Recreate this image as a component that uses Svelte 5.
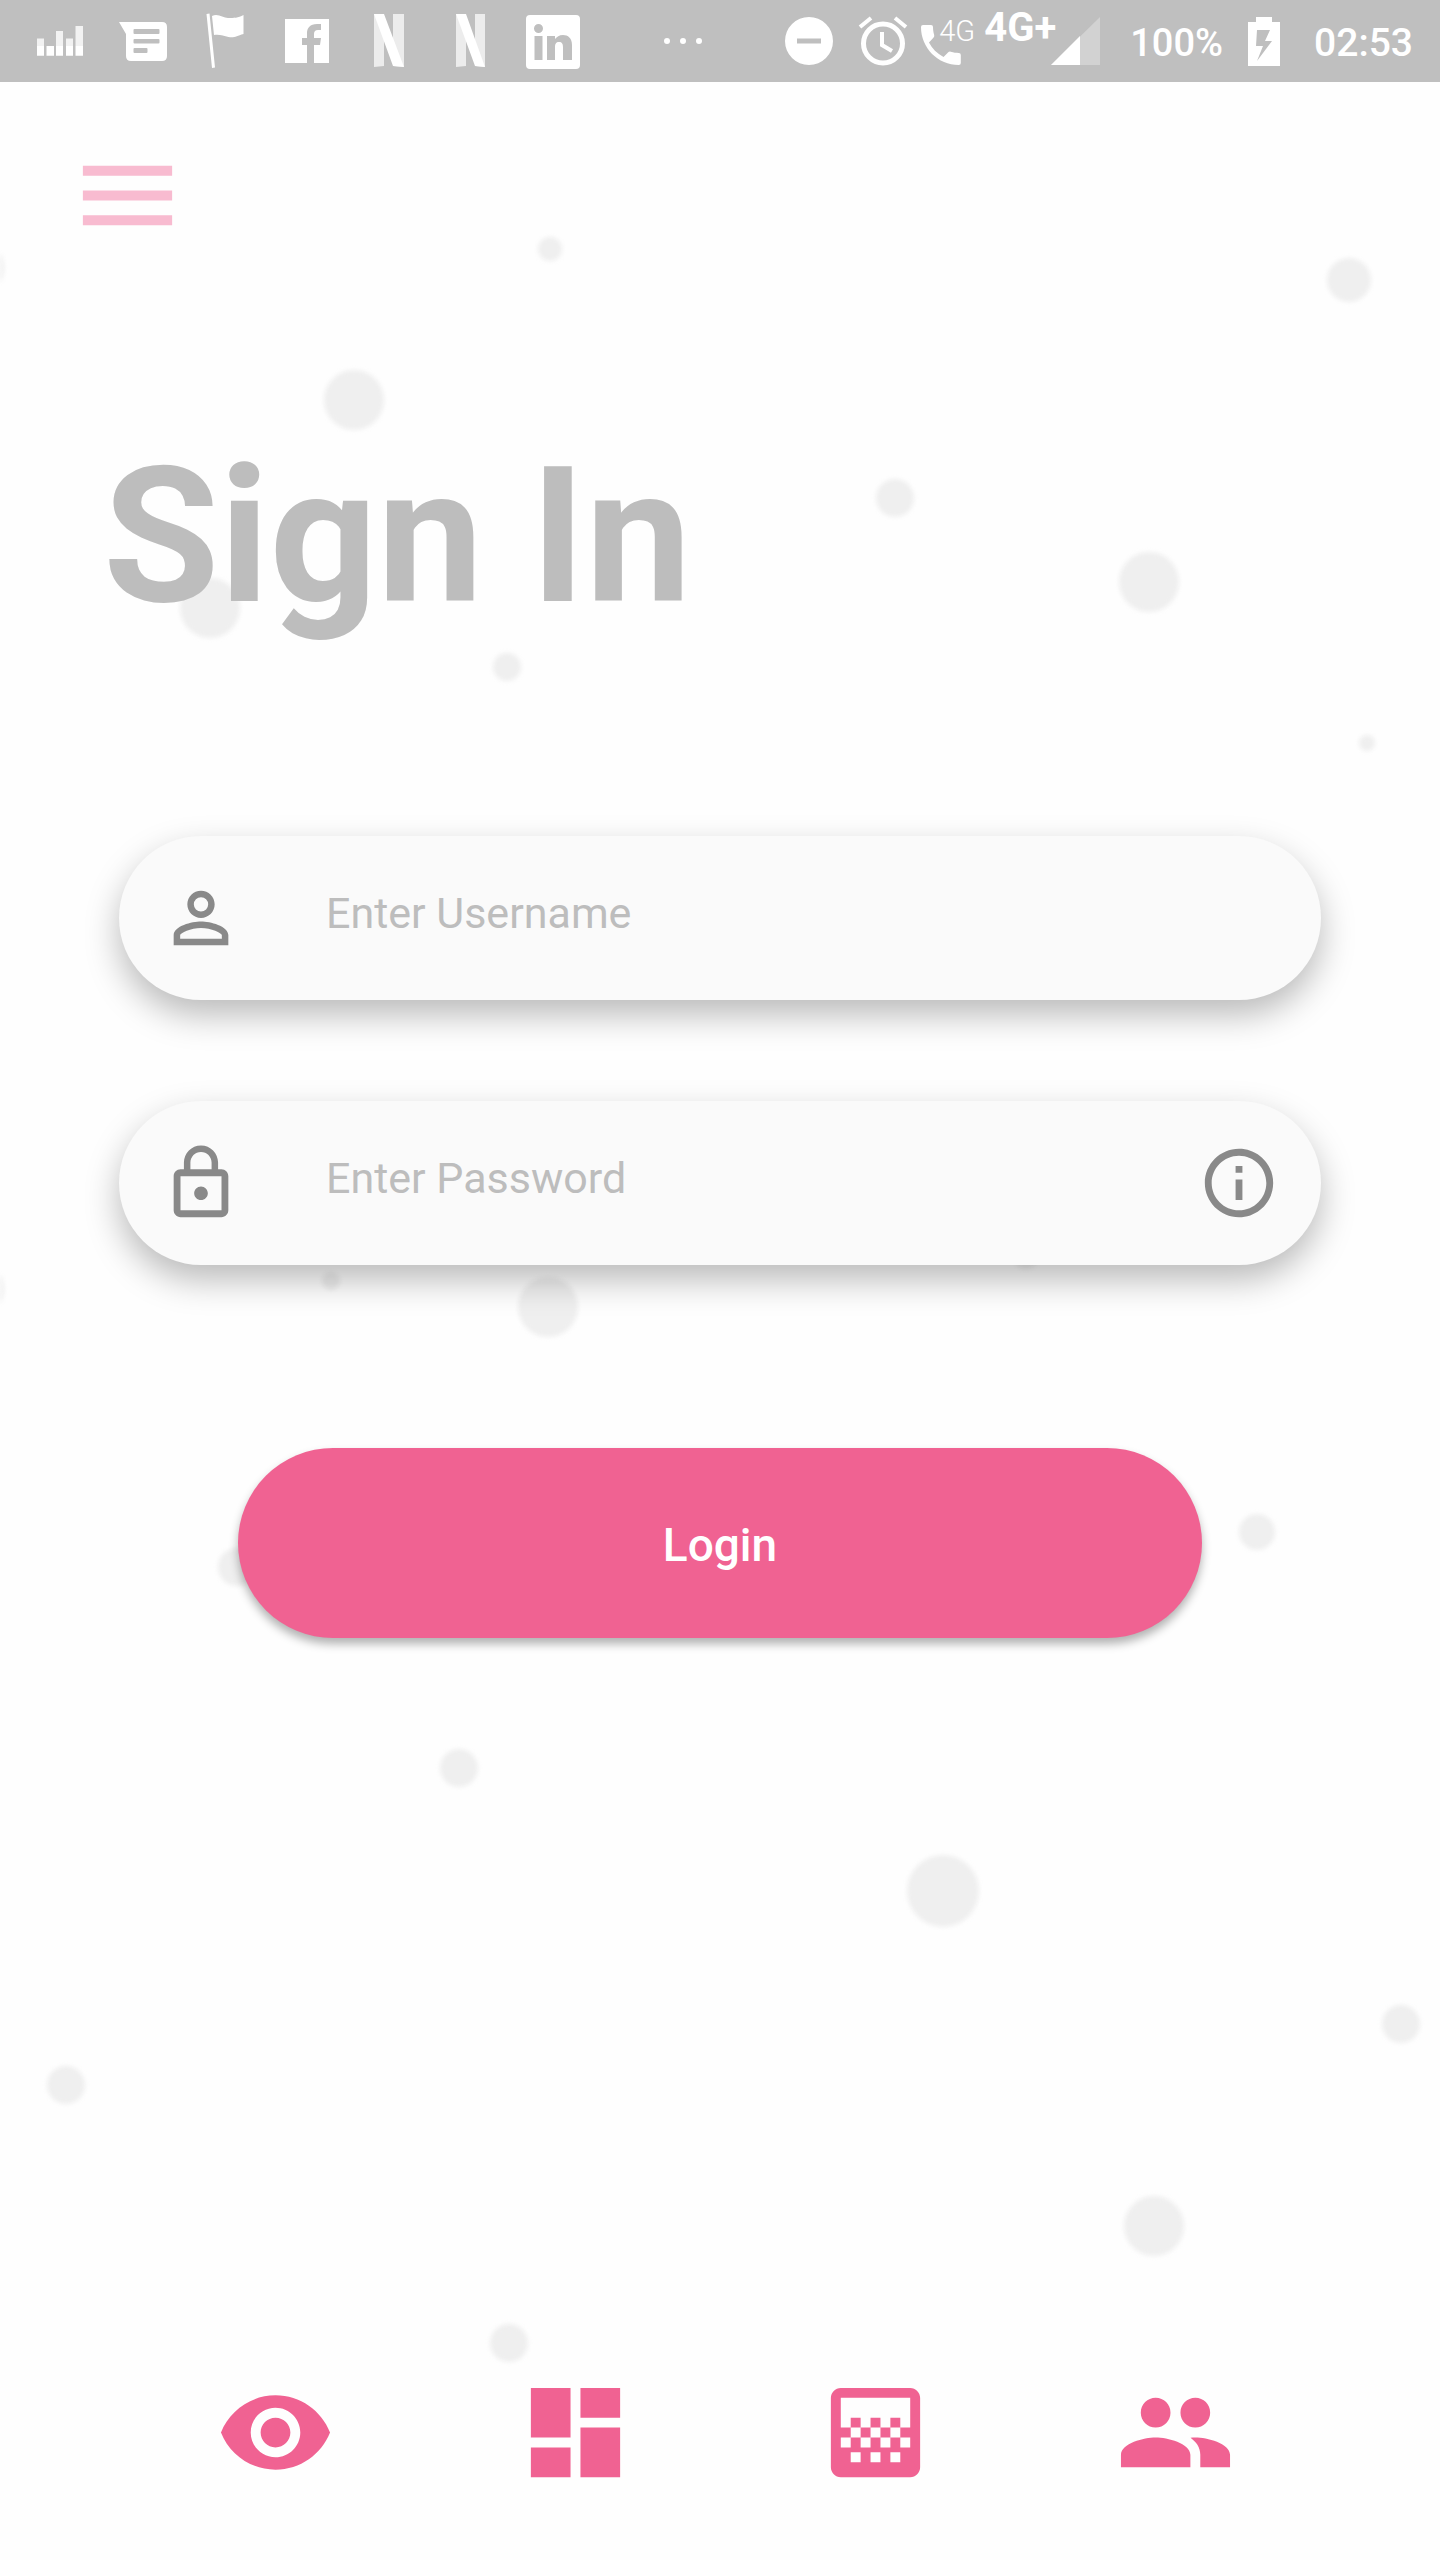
<script>
  // Soft dots scattered behind the form: centre x, centre y, radius
  const dots = [
    [550, 249, 12], [1349, 280, 22], [354, 400, 30], [895, 498, 19], [1149, 582, 30],
    [210, 608, 30], [507, 667, 14], [1367, 743, 8], [-26, 268, 30], [-26, 1289, 30],
    [331, 1281, 9], [548, 1307, 30], [1026, 1256, 13], [1257, 1532, 18], [237, 1567, 19],
    [459, 1768, 19], [943, 1891, 36], [1401, 2024, 19], [66, 2085, 19], [1154, 2226, 30],
    [509, 2343, 19]
  ];
  let username = $state('');
  let password = $state('');
</script>

<div class="screen">
  <svg class="dots" viewBox="0 0 1440 2560" preserveAspectRatio="xMidYMid slice" aria-hidden="true">
    {#each dots as [x, y, r]}
      <circle cx={x} cy={y} {r} />
    {/each}
  </svg>

  <header class="status">
    <div class="notices">
      <svg viewBox="0 0 640 82" width="640" height="82" aria-hidden="true">
        <g fill="#fff">
          <g opacity=".8">
            <path d="M37 38.500h7V46h-7zM56 31h7v15h-7zM66 38.500h7V46h-7zM75.500 26h7.500v20h-7.500z" />
          </g>
          <path d="M37 46h7v9.700h-7zM46.500 46h7.500v9.700h-7.500zM56 46h7v9.700h-7zM66 46h7v9.700h-7zM75.500 46h7.500v9.700h-7.500z" />
          <path fill-rule="evenodd" d="M119 22H162q5 0 5 5V56q0 5-5 5H131q-5 0-5-5V34zM134.500 29q-1 0-1 1v3q0 1 1 1h24q1 0 1-1v-3q0-1-1-1zM134.500 39q-1 0-1 1v2.500q0 1 1 1h24q1 0 1-1V40q0-1-1-1zM134.500 48q-1 0-1 1v3q0 1 1 1h12q1 0 1-1v-3q0-1-1-1z" />
          <path d="M206.500 14l3-.5 5.500 54-3 .5zM212 16c6-3 11 2 16 2 6 0 10 0 15.500-3v19c-7 2-9 4-15 3-5-1-9-3-14.500-2z" />
          <path d="M285 19h44v44h-15V45h6l1-7h-7v-4q0-4 4-4h3v-6h-4c-7 0-10 4-10 9v5h-5v7h5v18h-22z" />
          <g opacity=".7"><path d="M374 14h10v52l-10 1zM393 14h11v53l-11-1zM456 14h10v52l-10 1zM475 14h10v53l-10-1z" /></g>
          <path d="M374 14h10l20 53-11-1zM456 14h10l19 53-10-1z" />
          <path fill-rule="evenodd" d="M530 15h46q4 0 4 4v46q0 4-4 4h-46q-4 0-4-4V19q0-4 4-4zM534.500 36v24h8V36zM538.500 24a4.500 4.500 0 1 0 0 9 4.500 4.500 0 0 0 0-9zM547 36v24h8V47c0-3 1-5 4-5s4 2 4 5v13h9V45c0-7-4-10-9-10-4 0-6 2-8 4v-3z" />
        </g>
      </svg>
      <span class="more"><i></i><i></i><i></i></span>
    </div>
    <div class="system">
      <svg viewBox="785 0 137 82" width="137" height="82" aria-hidden="true">
        <path fill="#fff" fill-rule="evenodd" d="M810 17a24 24 0 1 0 0 48 24 24 0 0 0 0-48zM798 38.500h24v5h-24z" />
        <circle cx="884" cy="43.500" r="19.500" fill="none" stroke="#fff" stroke-width="5" />
        <path d="M883 32v13l10 6M861 27l11-9M907 27l-11-9" fill="none" stroke="#fff" stroke-width="4" />
      </svg>
      <span class="call">
        <svg viewBox="923 26 40 40" width="40" height="40" aria-hidden="true">
          <path fill="#fff" d="M925 26h8q2 0 2 2c0 3 .4 5 1.200 8q.4 1.500-.8 2.800l-4.400 4.700c3 6 8 11 14.500 14.500l4.500-4.500q1.200-1.200 2.800-.8c3 .8 5 1.200 8 1.200q2 0 2 2V64q0 2-2 2C940 66 923 49 923 28q0-2 2-2z" />
        </svg>
        <span>4G</span>
      </span>
      <span class="network">4G+</span>
      <svg class="signal" viewBox="0 0 49 48" width="49" height="48" aria-hidden="true">
        <path fill="#d2d2d2" d="M49 0v48H0z" /><path fill="#fff" d="M29 19v29H0z" />
      </svg>
      <span class="charge">100%</span>
      <svg viewBox="0 0 32 49" width="32" height="49" aria-hidden="true">
        <path fill="#fff" fill-rule="evenodd" d="M8 0h16v5h8v44H0V5h8zM9 13L8 29h7L9 44 24 24h-7l5-11z" />
      </svg>
      <time>02:53</time>
    </div>
  </header>

  <main>
    <button class="menu" aria-label="Open menu">
      <svg viewBox="0 0 24 24"><path d="M3 18h18v-2H3v2zm0-5h18v-2H3v2zm0-7v2h18V6H3z" /></svg>
    </button>

    <h1>Sign In</h1>

    <form onsubmit={(e) => e.preventDefault()}>
      <div class="field">
        <svg class="icon" viewBox="0 0 24 24" aria-hidden="true"><path d="M12 5.900a2.100 2.100 0 1 1 0 4.200 2.100 2.100 0 0 1 0-4.200m0 9c2.970 0 6.100 1.460 6.100 2.100v1.100H5.900V17c0-.64 3.130-2.100 6.100-2.100M12 4C9.790 4 8 5.790 8 8s1.790 4 4 4 4-1.790 4-4-1.790-4-4-4zm0 9c-2.670 0-8 1.340-8 4v3h16v-3c0-2.660-5.330-4-8-4z" /></svg>
        <input type="text" aria-label="Username" placeholder="Enter Username" bind:value={username} />
      </div>
      <div class="field">
        <svg class="icon" viewBox="0 0 24 24" aria-hidden="true"><path d="M12 17c1.100 0 2-.9 2-2s-.9-2-2-2-2 .9-2 2 .9 2 2 2zm6-9h-1V6c0-2.760-2.240-5-5-5S7 3.240 7 6v2H6c-1.100 0-2 .9-2 2v10c0 1.100.9 2 2 2h12c1.100 0 2-.9 2-2V10c0-1.100-.9-2-2-2zM8.900 6c0-1.710 1.390-3.100 3.100-3.100s3.100 1.390 3.100 3.100v2H8.900V6zM18 20H6V10h12v10z" /></svg>
        <input type="password" aria-label="Password" placeholder="Enter Password" bind:value={password} />
        <button class="info" type="button" aria-label="Password help">
          <svg class="icon" viewBox="0 0 24 24"><path d="M11 7h2v2h-2zm0 4h2v6h-2zm1-9C6.480 2 2 6.480 2 12s4.480 10 10 10 10-4.480 10-10S17.520 2 12 2zm0 18c-4.410 0-8-3.590-8-8s3.590-8 8-8 8 3.590 8 8-3.590 8-8 8z" /></svg>
        </button>
      </div>
      <button class="login" type="submit">Login</button>
    </form>
  </main>

  <nav>
    <button aria-label="View"><svg viewBox="0 0 24 24"><path d="M12 4.500C7 4.500 2.730 7.610 1 12c1.730 4.390 6 7.500 11 7.500s9.270-3.110 11-7.500c-1.730-4.390-6-7.500-11-7.500zM12 17c-2.760 0-5-2.240-5-5s2.240-5 5-5 5 2.240 5 5-2.240 5-5 5zm0-8c-1.660 0-3 1.340-3 3s1.340 3 3 3 3-1.340 3-3-1.340-3-3-3z" /></svg></button>
    <button aria-label="Dashboard"><svg viewBox="0 0 24 24"><path d="M3 13h8V3H3v10zm0 8h8v-6H3v6zm10 0h8V11h-8v10zm0-18v6h8V3h-8z" /></svg></button>
    <button aria-label="Gradient"><svg viewBox="0 0 24 24"><path d="M11 9h2v2h-2zm-2 2h2v2H9zm4 0h2v2h-2zm2-2h2v2h-2zM7 9h2v2H7zm12-6H5c-1.100 0-2 .9-2 2v14c0 1.100.9 2 2 2h14c1.100 0 2-.9 2-2V5c0-1.100-.9-2-2-2zM9 18H7v-2h2v2zm4 0h-2v-2h2v2zm4 0h-2v-2h2v2zm2-7h-2v2h2v2h-2v-2h-2v2h-2v-2h-2v2H9v-2H7v2H5v-2h2v-2H5V5h14v6z" /></svg></button>
    <button aria-label="People"><svg viewBox="0 0 24 24"><path d="M16 11c1.660 0 2.990-1.340 2.990-3S17.660 5 16 5c-1.660 0-3 1.340-3 3s1.340 3 3 3zm-8 0c1.660 0 2.990-1.340 2.990-3S9.660 5 8 5C6.340 5 5 6.340 5 8s1.340 3 3 3zm0 2c-2.330 0-7 1.170-7 3.500V19h14v-2.500c0-2.330-4.670-3.500-7-3.500zm8 0c-.29 0-.62.020-.97.050 1.160.84 1.970 1.970 1.970 3.450V19h6v-2.500c0-2.330-4.670-3.500-7-3.500z" /></svg></button>
  </nav>
</div>

<style>
  :global(body) { margin: 0; background: #fefefe; }
  .screen {
    position: relative;
    display: flex;
    flex-direction: column;
    min-height: 100vh;
    overflow: hidden;
    font-family: Roboto, sans-serif;
  }
  .dots { position: absolute; top: 0; left: 0; width: 100%; height: 100%; fill: #efefef; filter: blur(2px); }
  .status, main, nav { position: relative; }
  button { border: 0; padding: 0; background: none; font-family: inherit; cursor: pointer; }
  svg { display: block; flex: none; }

  .status {
    display: flex;
    justify-content: space-between;
    height: 82px;
    background: #bfbfbf;
    color: #fff;
  }
  .notices, .system { display: flex; align-items: center; }
  .system { padding-right: 27px; }
  .more { display: flex; gap: 10px; margin-left: 24px; }
  .more i { width: 6px; height: 6px; border-radius: 50%; background: #fff; }
  .call { display: flex; align-items: flex-start; height: 48px; width: 63px; }
  .call svg { align-self: flex-end; }
  .call span { margin-left: -22px; font-size: 29px; line-height: 28px; font-weight: 300; }
  .network { align-self: flex-start; padding-top: 8px; font-size: 40px; line-height: 40px; font-weight: 700; }
  .signal { margin-left: -5px; }
  .charge { margin: 0 25px 0 30px; font-size: 38px; font-weight: 500; line-height: 84px; padding-top: 4px; }
  time { margin-left: 34px; font-size: 39px; font-weight: 500; line-height: 84px; padding-top: 4px; }

  main { display: flex; flex-direction: column; flex: 1; }
  .menu { align-self: flex-start; margin: 54px 0 0 68px; }
  .menu svg { width: 119px; height: 119px; fill: #f8bbd0; }
  h1 {
    margin: 171px 0 0 103px;
    font-size: 189px;
    line-height: 222px;
    font-weight: 700;
    color: #bdbdbd;
  }
  form { display: flex; flex-direction: column; margin: 188px 119px 0; }
  .field {
    display: flex;
    align-items: center;
    height: 164px;
    padding: 0 41px;
    border-radius: 82px;
    background: #fafafa;
    box-shadow: 0 15px 34px rgba(0, 0, 0, .27);
  }
  .field + .field { margin-top: 101px; }
  .icon { width: 82px; height: 82px; fill: #898989; }
  input {
    flex: 1;
    min-width: 0;
    margin-left: 84px;
    padding: 0 0 10px;
    border: 0;
    outline: 0;
    background: none;
    font: 400 43px/52px Roboto, sans-serif;
    color: #616161;
  }
  input::placeholder { color: #bdbdbd; opacity: 1; }
  .login {
    height: 190px;
    margin: 183px 119px 0;
    padding-top: 3px;
    border-radius: 95px;
    background: #f06292;
    color: #fff;
    font-size: 46px;
    font-weight: 500;
    box-shadow: 0 6px 10px rgba(0, 0, 0, .3);
  }
  nav { display: grid; grid-template-columns: repeat(4, 1fr); padding: 0 114px 68px 125px; }
  nav button { justify-self: center; }
  nav svg { width: 119px; height: 119px; fill: #f06292; }
</style>
